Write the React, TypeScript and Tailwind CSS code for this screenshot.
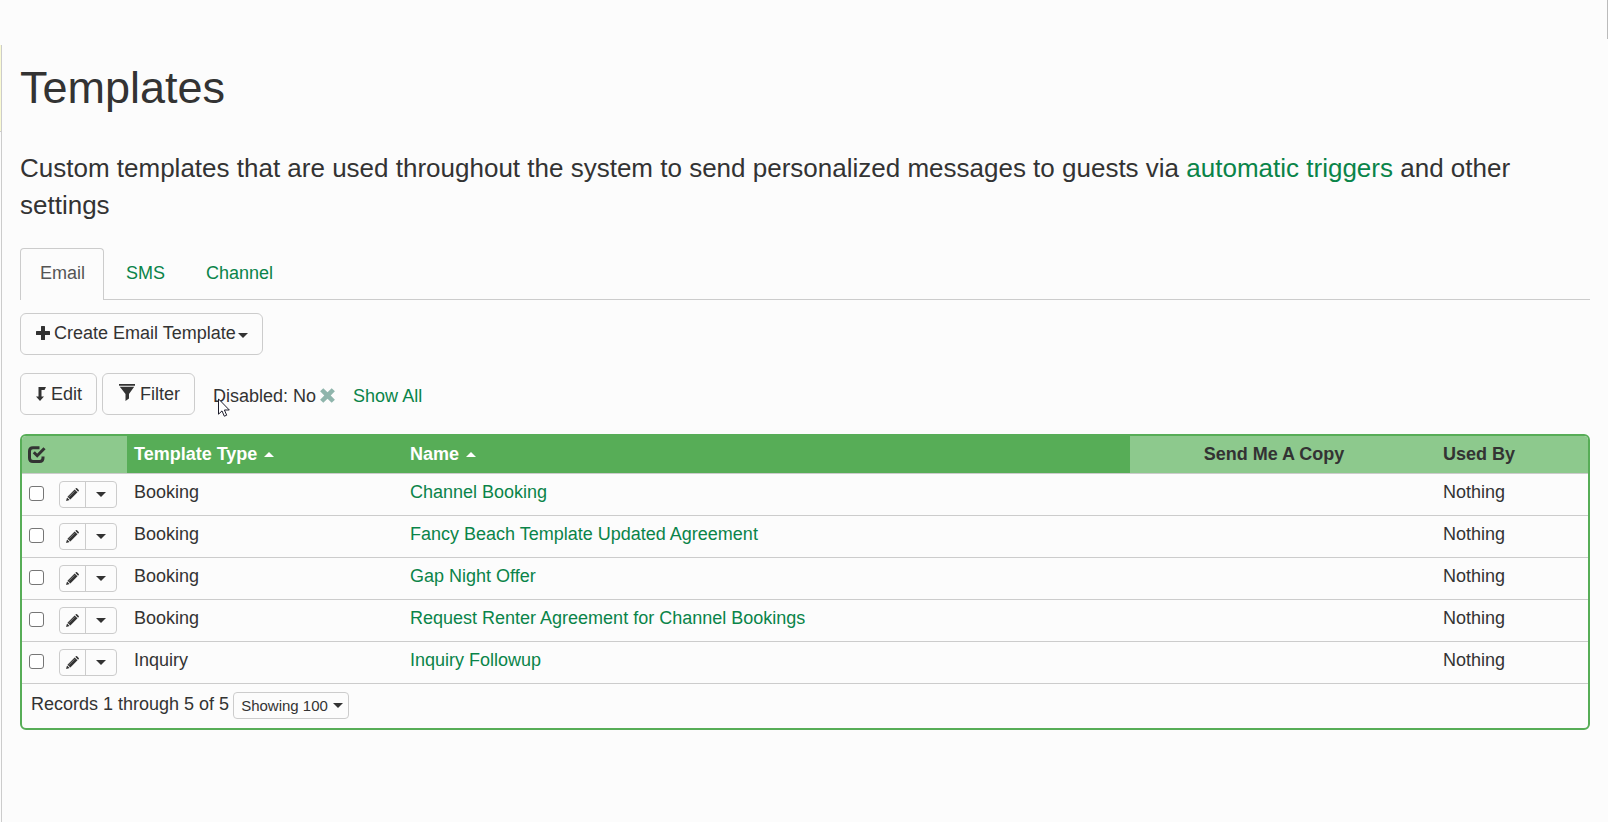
import React from 'react';
import { clsx } from 'clsx';

interface Template {
  type: string;
  name: string;
  usedBy: string;
}

interface IconProps {
  className?: string;
}

const tabs = ['Email', 'SMS', 'Channel'];

const templates: Template[] = [
  { type: 'Booking', name: 'Channel Booking', usedBy: 'Nothing' },
  { type: 'Booking', name: 'Fancy Beach Template Updated Agreement', usedBy: 'Nothing' },
  { type: 'Booking', name: 'Gap Night Offer', usedBy: 'Nothing' },
  { type: 'Booking', name: 'Request Renter Agreement for Channel Bookings', usedBy: 'Nothing' },
  { type: 'Inquiry', name: 'Inquiry Followup', usedBy: 'Nothing' },
];

const PlusIcon: React.FC<IconProps> = ({ className }) => (
  <svg viewBox="0 0 14 14" className={className} fill="currentColor" aria-hidden="true">
    <path d="M5.600 0h2.800q.6 0 .6.6V5h4.400q.6 0 .6.6v2.800q0 .6-.6.6H9v4.400q0 .6-.6.6H5.600q-.6 0-.6-.6V9H.6Q0 9 0 8.400V5.600Q0 5 .6 5H5V.6Q5 0 5.600 0z" />
  </svg>
);

const BulkEditIcon: React.FC<IconProps> = ({ className }) => (
  <svg viewBox="0 0 10 14" className={className} fill="currentColor" aria-hidden="true">
    <path d="M2.500 0H10L8.500 3H5.500v6.500H8L4 14 0 9.500h2.500z" />
  </svg>
);

const FilterIcon: React.FC<IconProps> = ({ className }) => (
  <svg viewBox="0 0 16 17" className={className} fill="currentColor" aria-hidden="true">
    <path d="M0 0h16v1.700H0zM.8 2.800h14.400L10 10v4.500L6.500 17v-7z" />
  </svg>
);

const RemoveIcon: React.FC<IconProps> = ({ className }) => (
  <svg viewBox="0 0 15 15" className={className} fill="currentColor" aria-hidden="true">
    <path d="M3.300.2 7.500 4.200 11.700.2 14.900 3.300 10.700 7.500l4.200 4.200-3.200 3.100-4.200-4-4.200 4-3.200-3.100 4.200-4.200L.1 3.300z" />
  </svg>
);

const CheckIcon: React.FC<IconProps> = ({ className }) => (
  <svg viewBox="0 0 18 17" className={className} fill="none" stroke="currentColor" aria-hidden="true">
    <path d="M11.500 1.700H5Q1.500 1.700 1.500 5v7q0 3.500 3.500 3.500h6.500q3.500 0 3.500-3.500v-1.500" strokeWidth="3" />
    <path d="m5.800 6.300 3.400 3.400 7.300-7.400" strokeWidth="3" />
  </svg>
);

const PencilIcon: React.FC<IconProps> = ({ className }) => (
  <svg viewBox="0 0 14 14" className={className} fill="currentColor" aria-hidden="true">
    <path d="m10 .9.700-.6q.6-.5 1.200 0l1.800 1.800q.5.600 0 1.200l-.7.700zM9.300 1.600l3.100 3.100-7.700 7.700-3.100-3.100zM1.100 10.100l2.800 2.800L0 14z" />
    <path d="m3.200 9.500 6-6" stroke="#fcfcfc" strokeWidth=".4" />
  </svg>
);

const Caret: React.FC<IconProps & { up?: boolean }> = ({ className, up }) => (
  <svg viewBox="0 0 10 5" className={clsx('h-[5px] w-[10px] shrink-0', className)} fill="currentColor" aria-hidden="true">
    <path d={up ? 'M0 5 5 0l5 5z' : 'M0 0h10L5 5z'} />
  </svg>
);

const Pointer: React.FC<IconProps> = ({ className }) => (
  <svg viewBox="0 0 12 19" className={className} aria-hidden="true">
    <path d="M.5.9v15.300l3.500-3.300 2.300 5.300 2.400-1-2.300-5.200h4.900z" fill="#fff" stroke="#1c1c2b" />
  </svg>
);

const RowActions: React.FC<{ name: string }> = ({ name }) => (
  <div className="flex h-[27px] w-[58px] rounded border border-[#ccc]">
    <button type="button" aria-label={`Edit ${name}`} className="flex w-[26px] items-center justify-center border-r border-[#ccc]">
      <PencilIcon className="size-[13px]" />
    </button>
    <button type="button" aria-label={`More actions for ${name}`} aria-haspopup="menu" className="flex flex-1 items-center justify-center">
      <Caret />
    </button>
  </div>
);

export default function App() {
  return (
    <div className="relative flex min-h-screen flex-col bg-[#fcfcfc] font-['Liberation_Sans',Arial,sans-serif] text-lg leading-[25px] text-[#333]">
      <div className="h-[45px] shrink-0">
        <div className="ml-auto h-[39px] w-px bg-[#bbb]" />
      </div>

      <div className="flex flex-1">
        {/* Edge of the collapsed side menu */}
        <div className="w-[2px] shrink-0 border-r border-[#ccc]">
          <div className="h-[87px] border-b border-[#ccc] bg-[#fafad2]" />
        </div>

        <main className="min-w-0 flex-1 px-[18px]">
          <h1 className="pt-[18px] text-[45px] leading-[50px]">Templates</h1>

          <p className="mt-[37px] text-[26px] leading-[37px]">
            Custom templates that are used throughout the system to send personalized messages to guests via{' '}
            <a href="#triggers" className="text-[#0a8449]">automatic triggers</a> and other settings
          </p>

          <nav className="mt-6 flex h-[52px] border-b border-[#ccc]">
            {tabs.map((tab, index) => (
              <a
                key={tab}
                href={`#${tab.toLowerCase()}`}
                className={clsx(
                  'mr-[2px] h-[52px] rounded-t border border-b-0 pt-[12px] pr-[18px] pl-[19px]',
                  index === 0 ? 'border-[#ccc] bg-[#fcfcfc] text-[#555]' : 'border-transparent text-[#0a8449]'
                )}
              >
                {tab}
              </a>
            ))}
          </nav>

          <button type="button" aria-haspopup="menu" className="mt-[13px] flex h-[42px] items-center rounded-md border border-[#ccc] pr-[14px] pb-[2px] pl-[15px]">
            <PlusIcon className="mr-[4px] size-[14px]" />
            Create Email Template
            <Caret className="mt-1 ml-[2px]" />
          </button>

          <div className="mt-[18px] flex h-[42px] items-center">
            <button type="button" className="flex h-full items-center rounded-md border border-[#ccc] pr-[14px] pl-[15px]">
              <BulkEditIcon className="mr-[5px] h-[14px] w-[10px]" />
              Edit
            </button>
            <button type="button" className="ml-[5px] flex h-full items-center rounded-md border border-[#ccc] pr-[14px] pl-[16px]">
              <FilterIcon className="mr-[5px] mb-1 h-[17px] w-[16px]" />
              Filter
            </button>
            <span className="relative ml-[18px] pt-1">
              Disabled: No
              <Pointer className="absolute top-[18px] left-[5px] h-[19px] w-[12px]" />
            </span>
            <button type="button" aria-label="Remove filter" className="ml-[4px] pt-[2px] text-[#8fb5ac]">
              <RemoveIcon className="size-[15px]" />
            </button>
            <a href="#all" className="ml-[18px] pt-1 text-[#0a8449]">Show All</a>
          </div>

          <div className="mt-[19px] overflow-hidden rounded-md border-2 border-[#57ad57]">
            <table className="w-full table-fixed border-collapse text-left">
              <colgroup>
                <col className="w-[36px]" />
                <col className="w-[69px]" />
                <col className="w-[276px]" />
                <col />
                <col className="w-[306px]" />
                <col className="w-[152px]" />
              </colgroup>
              <thead>
                <tr className="h-[37px] border-b border-[#ccc] bg-[#8dc98d]">
                  <th colSpan={2} className="p-0 pl-[6px]">
                    <button type="button" aria-label="Select all" className="flex">
                      <CheckIcon className="h-[17px] w-[18px]" />
                    </button>
                  </th>
                  <th className="bg-[#57ad57] p-0 pl-[7px] text-white">
                    <span className="flex items-center gap-[7px]">Template Type <Caret up /></span>
                  </th>
                  <th className="bg-[#57ad57] p-0 pl-[7px] text-white">
                    <span className="flex items-center gap-[7px]">Name <Caret up /></span>
                  </th>
                  <th className="p-0 pr-[18px] text-center">Send Me A Copy</th>
                  <th className="p-0 pl-[7px]">Used By</th>
                </tr>
              </thead>
              <tbody>
                {templates.map((template) => (
                  <tr key={template.name} className="h-[42px] border-b border-[#ccc]">
                    <td className="p-0 pb-[2px] pl-[7px]">
                      <input
                        type="checkbox"
                        aria-label={`Select ${template.name}`}
                        className="block size-[15px] appearance-none rounded-[3px] border border-[#767676] bg-white"
                      />
                    </td>
                    <td className="p-0 pl-px">
                      <RowActions name={template.name} />
                    </td>
                    <td className="p-0 pb-1 pl-[7px]">{template.type}</td>
                    <td className="p-0 pb-1 pl-[7px]">
                      <a href="#template" className="text-[#0a8449]">{template.name}</a>
                    </td>
                    <td className="p-0" />
                    <td className="p-0 pb-1 pl-[7px]">{template.usedBy}</td>
                  </tr>
                ))}
              </tbody>
            </table>

            <div className="flex h-[44px] items-center pl-[9px]">
              <label htmlFor="page-size" className="pb-[2px]">Records 1 through 5 of 5</label>
              <div className="relative ml-[4px] flex items-center">
                <select
                  id="page-size"
                  className="h-[27px] appearance-none rounded border border-[#ccc] pr-[20px] pl-[7px] text-[15px] leading-[22px]"
                >
                  <option>Showing 100</option>
                </select>
                <Caret className="pointer-events-none absolute right-[6px]" />
              </div>
            </div>
          </div>
        </main>
      </div>
    </div>
  );
}
